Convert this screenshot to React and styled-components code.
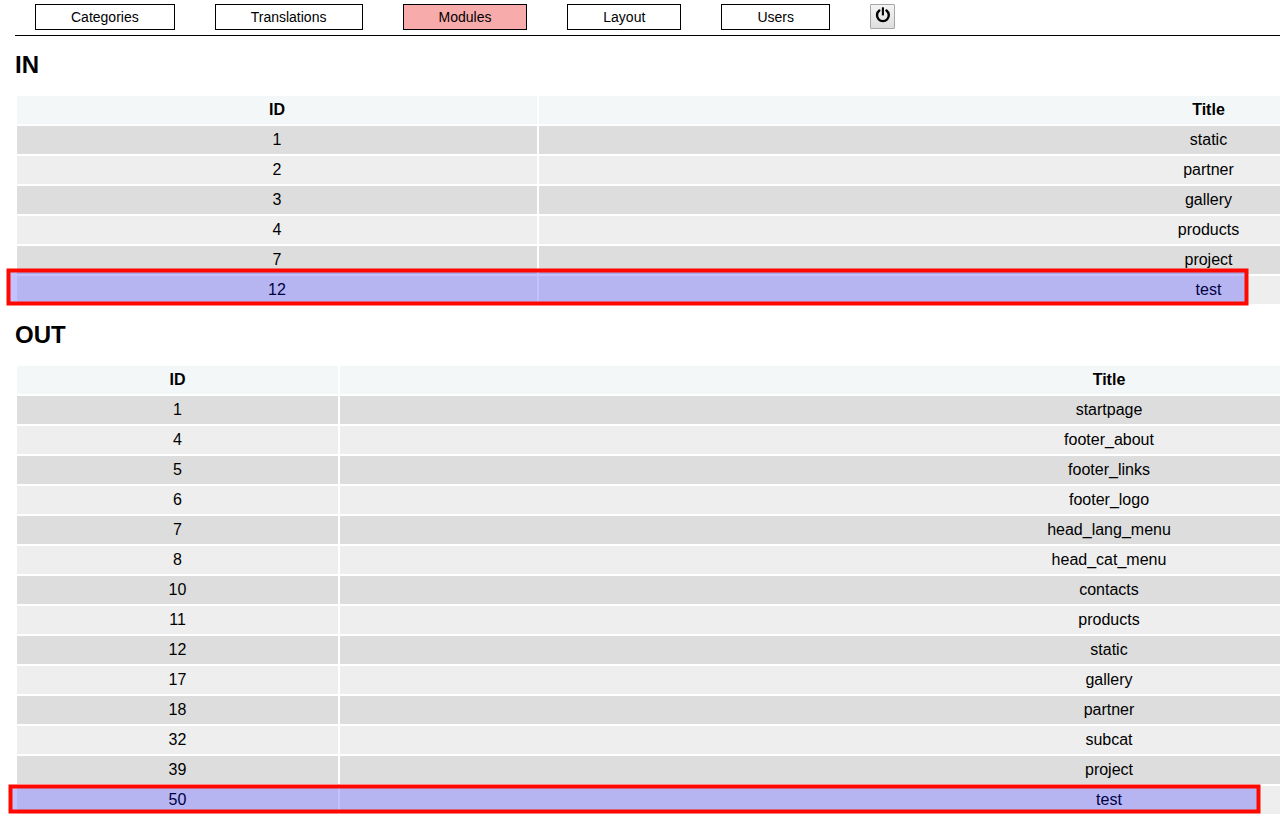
import React from "react";
import styled, { createGlobalStyle } from "styled-components";

const GlobalStyle = createGlobalStyle`
  html, body, #root {
    height: 100%;
  }
  body {
    margin: 0;
    overflow: hidden;
    background: #fff;
    color: #000;
    font-family: "Liberation Sans", Arial, sans-serif;
    font-size: 16px;
  }
`;

const Page = styled.div`
  position: relative;
  box-sizing: border-box;
  height: 100%;
  overflow: hidden;
  padding-left: 15px;
`;

const Content = styled.div`
  width: 1865px;
`;

const NavBar = styled.nav`
  display: flex;
  align-items: flex-start;
  gap: 40px;
  box-sizing: border-box;
  height: 36px;
  padding: 4px 20px 0;
  border-bottom: 1px solid #000;
`;

const NavButton = styled.button`
  box-sizing: border-box;
  width: ${({ $width }) => $width}px;
  height: 26px;
  padding: 0 0 0 ${({ $inset }) => $inset}px;
  border: 1px solid #000;
  background: ${({ $active }) => ($active ? "#f8abab" : "#fff")};
  color: #000;
  font: 14px/24px "Liberation Sans", Arial, sans-serif;
  text-align: left;
`;

const PowerButton = styled.button`
  display: flex;
  align-items: flex-start;
  justify-content: center;
  box-sizing: border-box;
  width: 25px;
  height: 25px;
  padding: 2px 0 0;
  border: 1px solid #a6a6a6;
  border-radius: 1px;
  background: linear-gradient(#f4f4f4, #dedede);
  color: #000;
`;

const Heading = styled.h2`
  margin: 0;
  height: 58px;
  box-sizing: border-box;
  padding-top: 15px;
  font-size: 24px;
  line-height: 28px;
  font-weight: bold;
`;

const Section = styled.section`
  height: ${({ $height }) => $height};
`;

const Table = styled.table`
  width: 1865px;
  table-layout: fixed;
  border-collapse: separate;
  border-spacing: 2px;
`;

const Row = styled.tr`
  background: ${({ $even }) => ($even ? "#eee" : "#ddd")};
`;

const HeadRow = styled.tr`
  background: #f3f7f8;
`;

const Cell = styled.td`
  height: 28px;
  padding: 0;
  line-height: 18px;
  text-align: center;
  vertical-align: middle;
`;

const IdHead = styled(Cell).attrs({ as: "th" })`
  width: ${({ $width }) => $width}px;
`;

const TitleHead = styled(Cell).attrs({ as: "th" })``;

const Marks = styled.svg`
  position: absolute;
  top: 0;
  left: 0;
  pointer-events: none;
`;

const Mark = styled.rect`
  fill: rgba(5, 0, 255, 0.24);
  stroke: #ff0800;
  stroke-width: 4px;
`;

const navItems = [
  { label: "Categories", width: 140, inset: 35 },
  { label: "Translations", width: 148, inset: 34.7 },
  { label: "Modules", width: 124, inset: 34.5, active: true },
  { label: "Layout", width: 114, inset: 35.3 },
  { label: "Users", width: 109, inset: 35.4 },
];

const inRows = [
  [1, "static"],
  [2, "partner"],
  [3, "gallery"],
  [4, "products"],
  [7, "project"],
  [12, "test"],
];

const outRows = [
  [1, "startpage"],
  [4, "footer_about"],
  [5, "footer_links"],
  [6, "footer_logo"],
  [7, "head_lang_menu"],
  [8, "head_cat_menu"],
  [10, "contacts"],
  [11, "products"],
  [12, "static"],
  [17, "gallery"],
  [18, "partner"],
  [32, "subcat"],
  [39, "project"],
  [50, "test"],
];

function PowerIcon() {
  return (
    <svg width="17" height="16" viewBox="0 0 17 16" fill="none" stroke="currentColor">
      <path d="M5.35 3.55A5.9 5.9 0 1 0 12.45 3.55" strokeWidth="2.4" strokeLinecap="round" />
      <path d="M8.9 0.3V8.4" strokeWidth="2.1" />
    </svg>
  );
}

function ModuleSection({ title, rows, idWidth, height }) {
  return (
    <Section $height={height}>
      <Heading>{title}</Heading>
      <Table>
        <thead>
          <HeadRow>
            <IdHead $width={idWidth}>ID</IdHead>
            <TitleHead>Title</TitleHead>
          </HeadRow>
        </thead>
        <tbody>
          {rows.map(([id, name], index) => (
            <Row key={id} $even={index % 2 === 1}>
              <Cell>{id}</Cell>
              <Cell>{name}</Cell>
            </Row>
          ))}
        </tbody>
      </Table>
    </Section>
  );
}

export default function App() {
  return (
    <>
      <GlobalStyle />
      <Page>
        <Content>
          <NavBar>
            {navItems.map((item) => (
              <NavButton key={item.label} $width={item.width} $inset={item.inset} $active={item.active}>
                {item.label}
              </NavButton>
            ))}
            <PowerButton aria-label="Log out">
              <PowerIcon />
            </PowerButton>
          </NavBar>
          <ModuleSection title="IN" rows={inRows} idWidth={520} height="270px" />
          <ModuleSection title="OUT" rows={outRows} idWidth={321} height="auto" />
        </Content>
        <Marks width="1280" height="821">
          <Mark x="8.5" y="270.5" width="1238" height="33" />
          <Mark x="10.5" y="786.5" width="1248" height="25" />
        </Marks>
      </Page>
    </>
  );
}
